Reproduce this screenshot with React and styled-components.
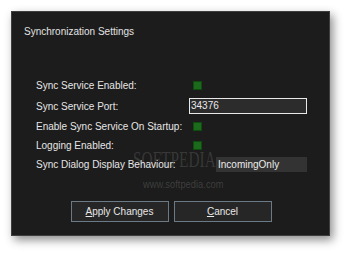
import React from "react";
import styled, { createGlobalStyle } from "styled-components";

const GlobalStyle = createGlobalStyle`
  html, body {
    margin: 0;
    padding: 0;
    background: #ffffff;
  }
`;

const settings = [
  { label: "Sync Service Enabled:", type: "check" },
  { label: "Sync Service Port:", type: "input", value: "34376" },
  { label: "Enable Sync Service On Startup:", type: "check" },
  { label: "Logging Enabled:", type: "check" },
  { label: "Sync Dialog Display Behaviour:", type: "select", value: "IncomingOnly" },
];

const App = () => {
  return (
    <Page>
      <GlobalStyle />
      <Dialog>
        <Title>Synchronization Settings</Title>
        <Form>
          {settings.map((row) => (
            <Row key={row.label} tall={row.type === "input"}>
              <Label>{row.label}</Label>
              {row.type === "check" && <Check />}
              {row.type === "input" && <Input>{row.value}</Input>}
              {row.type === "select" && <Select>{row.value}</Select>}
            </Row>
          ))}
        </Form>
        <Buttons>
          <Button>
            <u>A</u>pply Changes
          </Button>
          <Button>
            <u>C</u>ancel
          </Button>
        </Buttons>
        <Brand>SOFTPEDIA</Brand>
        <Site>www.softpedia.com</Site>
      </Dialog>
    </Page>
  );
};

export default App;

// Styled Components
const Page = styled.div`
  width: 350px;
  height: 256px;
  padding: 11px 0 0 11px;
  box-sizing: border-box;
  font-family: "Liberation Sans", Arial, sans-serif;
`;

const Dialog = styled.div`
  position: relative;
  width: 319px;
  height: 225px;
  box-sizing: border-box;
  background: #1c1c1c;
  border: 1px solid #3e3e3e;
  box-shadow: 3px 4px 9px rgba(0, 0, 0, 0.45);
  display: flex;
  flex-direction: column;
`;

const Title = styled.div`
  color: #e2e2e2;
  font-size: 10px;
  padding: 14px 0 0 12px;
  height: 12px;
  line-height: 12px;
`;

const Form = styled.div`
  display: flex;
  flex-direction: column;
  padding: 38px 0 0 24px;
`;

const Row = styled.div`
  display: grid;
  grid-template-columns: 153px 118px;
  align-items: center;
  height: ${(props) => (props.tall ? "22px" : "19px")};
`;

const Label = styled.div`
  color: #e6e6e6;
  font-size: 10px;
  white-space: nowrap;
`;

const Check = styled.div`
  width: 9px;
  height: 9px;
  margin-left: 4px;
  box-sizing: border-box;
  background: #1c6a1c;
  border: 1px solid #0f4a0f;
`;

const Input = styled.div`
  height: 16px;
  box-sizing: border-box;
  border: 1px solid #e8e8e8;
  background: #2c2c2c;
  color: #e8e8e8;
  font-size: 10px;
  line-height: 14px;
  padding-left: 1px;
`;

const Select = styled.div`
  height: 15px;
  margin-left: 27px;
  padding-left: 2px;
  background: #333333;
  color: #ececec;
  font-size: 10px;
  line-height: 15px;
`;

const Buttons = styled.div`
  display: flex;
  justify-content: center;
  gap: 5px;
  margin-top: 27px;
  padding-left: 1px;
`;

const Button = styled.div`
  width: 98px;
  height: 21px;
  box-sizing: border-box;
  border: 1px solid #6c7a86;
  background: #262626;
  color: #e8e8e8;
  font-size: 10px;
  display: flex;
  align-items: center;
  justify-content: center;
`;

const Brand = styled.div`
  position: absolute;
  left: 121px;
  top: 135px;
  font-family: "Liberation Serif", "Times New Roman", serif;
  font-size: 24px;
  line-height: 24px;
  color: rgba(255, 255, 255, 0.13);
  transform: scaleX(0.64);
  transform-origin: left center;
  pointer-events: none;
`;

const Site = styled.div`
  position: absolute;
  left: 131px;
  top: 166px;
  font-family: "Liberation Sans", Arial, sans-serif;
  font-size: 11px;
  line-height: 13px;
  color: rgba(255, 255, 255, 0.16);
  transform: scaleX(0.85);
  transform-origin: left center;
  pointer-events: none;
`;
